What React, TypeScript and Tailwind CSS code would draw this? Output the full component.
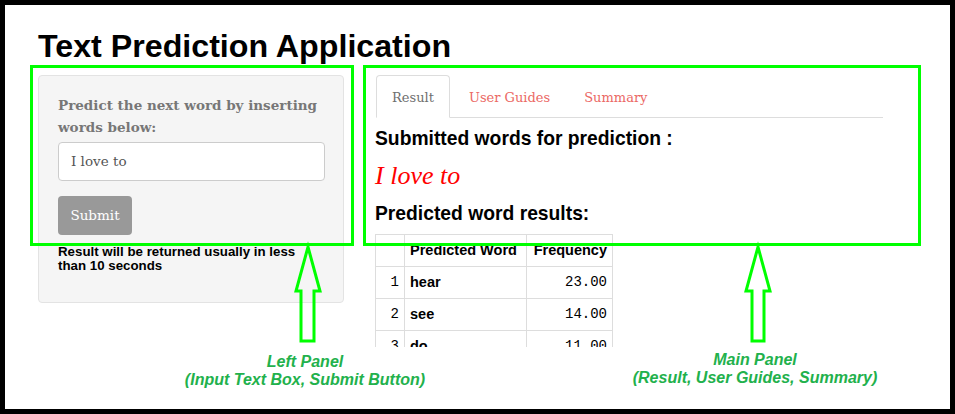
import React from "react";

const serif = "font-['DejaVu_Serif',serif]";
const times = "font-['Liberation_Serif','Times_New_Roman',serif]";
const sans = "font-['Liberation_Sans',Arial,sans-serif]";
const mono = "font-['Liberation_Mono','Courier_New',monospace]";

const rows = [
  { i: 1, w: "hear", f: "23.00" },
  { i: 2, w: "see", f: "14.00" },
  { i: 3, w: "do", f: "11.00" },
  { i: 4, w: "be", f: "9.00" },
];

export default function App() {
  return (
    <div className="relative w-[955px] h-[414px] overflow-hidden bg-white border-[5px] border-black">
      <div className="pl-[33px] pt-[23px]">
        <h1 className={`${sans} text-[32.2px] leading-[36px] font-bold text-black`}>
          Text Prediction Application
        </h1>
        <div className="flex mt-[11px] gap-[31px]">
          {/* Left sidebar */}
          <div className="w-[306px] shrink-0">
            <div className="bg-[#f5f5f5] border border-[#e3e3e3] rounded-[4px] pt-[18px] px-[19px] pb-[29px]">
              <label className={`${serif} block text-[13.5px] leading-[22px] font-bold text-[#777]`}>
                Predict the next word by inserting words below:
              </label>
              <div className={`${serif} mt-[4px] h-[39px] w-[267px] border border-[#ccc] rounded-[4px] bg-white flex items-center px-[12px] text-[13.5px] text-[#555]`}>
                I love to
              </div>
              <div className={`${serif} mt-[15px] h-[39px] w-[74px] rounded-[4px] bg-[#999] text-white flex items-center justify-center text-[13.5px]`}>
                Submit
              </div>
              <p className={`${sans} mt-[10px] w-[250px] text-[13.3px] leading-[14px] font-bold text-black`}>
                Result will be returned usually in less than 10 seconds
              </p>
            </div>
          </div>
          {/* Main panel */}
          <div className="w-[508px]">
            <div className={`${serif} flex border-b border-[#ddd] ml-[1px] h-[43px] text-[13px]`}>
              <div className="h-[43px] px-[15px] pt-[3px] flex items-center border border-[#ddd] border-b-white bg-white rounded-t-[4px] text-[#6f6f6f] -mb-px">
                Result
              </div>
              <div className="h-[42px] ml-[4px] px-[15px] pt-[3px] flex items-center text-[#eb6864]">User Guides</div>
              <div className="h-[42px] ml-[4px] px-[15px] pt-[3px] flex items-center text-[#eb6864]">Summary</div>
            </div>
            <h3 className={`${sans} mt-[9px] text-[19.3px] leading-[23px] font-bold text-black`}>
              Submitted words for prediction :
            </h3>
            <div className={`${times} mt-[11px] text-[26px] leading-[30px] italic text-[#ff0000]`}>
              I love to
            </div>
            <h3 className={`${sans} mt-[11px] text-[19.3px] leading-[23px] font-bold text-black`}>
              Predicted word results:
            </h3>
            <div className="mt-[9px] h-[113px] overflow-hidden">
              <table className="border-collapse text-[14px]">
                <thead>
                  <tr className="h-[32px]">
                    <th className="w-[29px] border border-[#ddd]"></th>
                    <th className={`${sans} w-[122px] border border-[#ddd] text-left px-[5px] font-bold text-[14.5px]`}>Predicted Word</th>
                    <th className={`${sans} w-[86px] border border-[#ddd] text-right px-[5px] font-bold text-[14.5px]`}>Frequency</th>
                  </tr>
                </thead>
                <tbody>
                  {rows.map((r) => (
                    <tr key={r.i} className="h-[32px]">
                      <td className={`${mono} border border-[#ddd] text-right px-[5px]`}>{r.i}</td>
                      <td className={`${sans} border border-[#ddd] px-[5px] font-bold text-[14.5px]`}>{r.w}</td>
                      <td className={`${mono} border border-[#ddd] text-right px-[5px]`}>{r.f}</td>
                    </tr>
                  ))}
                </tbody>
              </table>
            </div>
          </div>
        </div>
      </div>

      {/* Annotation overlay */}
      <svg className="absolute left-[-5px] top-[-5px] pointer-events-none" width="955" height="414">
        <g fill="none" stroke="#00ff00" strokeWidth="3">
          <rect x="31.5" y="66.5" width="321" height="178" />
          <rect x="364.5" y="66.5" width="555" height="178" />
          <polygon points="308,247 320,291 314,291 314,341 301,341 301,291 296,291" />
          <polygon points="758,247 770,291 764,291 764,341 752,341 752,291 746,291" />
        </g>
      </svg>
      <div className={`${sans} absolute left-[135px] top-[348px] w-[330px] text-center italic font-bold text-[16px] leading-[18px] text-[#22b14c]`}>
        <div>Left Panel</div>
        <div>(Input Text Box, Submit Button)</div>
      </div>
      <div className={`${sans} absolute left-[585px] top-[346px] w-[330px] text-center italic font-bold text-[16px] leading-[18px] text-[#22b14c]`}>
        <div>Main Panel</div>
        <div>(Result, User Guides, Summary)</div>
      </div>
    </div>
  );
}
